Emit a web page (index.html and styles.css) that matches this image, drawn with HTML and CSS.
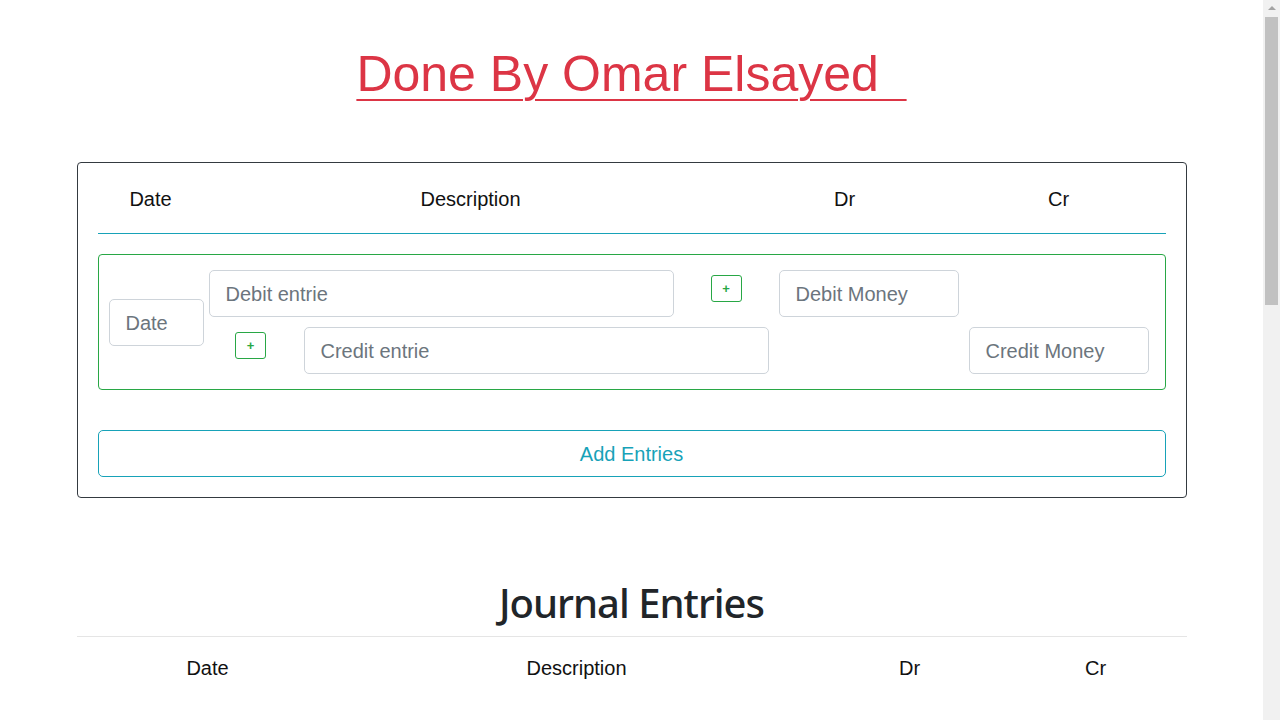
FILE: index.html
```html
<!DOCTYPE html>
<html lang="en">
<head>
<meta charset="utf-8">
<title>Journal Entries</title>
<link rel="stylesheet" href="styles.css">
</head>
<body>
<div class="container">
  <h1 class="title"><u>Done By Omar Elsayed&nbsp;&nbsp;</u></h1>

  <div class="card">
    <div class="head-grid">
      <div>Date</div>
      <div>Description</div>
      <div>Dr</div>
      <div>Cr</div>
    </div>

    <div class="entry">
      <input class="field date-field" type="text" placeholder="Date">
      <div class="rows">
        <div class="row">
          <input class="field desc-field" type="text" placeholder="Debit entrie">
          <div class="slot slot-wide"><button class="plus">+</button></div>
          <input class="field money-field" type="text" placeholder="Debit Money">
        </div>
        <div class="row">
          <div class="slot slot-left"><button class="plus">+</button></div>
          <input class="field desc-field" type="text" placeholder="Credit entrie">
          <div class="spacer"></div>
          <input class="field money-field" type="text" placeholder="Credit Money">
        </div>
      </div>
    </div>

    <button class="add-btn">Add Entries</button>
  </div>

  <section class="journal">
    <h2 class="journal-title">Journal Entries</h2>
    <hr class="divider">
    <div class="journal-head">
      <div>Date</div>
      <div>Description</div>
      <div>Dr</div>
      <div>Cr</div>
    </div>
    <div class="journal-body"></div>
  </section>
</div>

<div class="fake-scrollbar" aria-hidden="true">
  <div class="sb-arrow"></div>
  <div class="sb-thumb"></div>
</div>
</body>
</html>
```

FILE: styles.css
```css
html, body {
  margin: 0;
  padding: 0;
  background: #ffffff;
}

body {
  font-family: "Comic Sans MS", "Liberation Sans", Arial, sans-serif;
  color: #212529;
  padding-right: 17px;
}

.container {
  max-width: 1110px;
  margin: 0 auto;
  padding: 0 15px;
}

.title {
  margin: 44px 0 0;
  font-size: 50px;
  line-height: 60px;
  font-weight: 400;
  text-align: center;
  color: #dc3545;
}

.title u {
  text-decoration: underline;
  text-decoration-thickness: 2px;
  text-underline-offset: 8px;
}

.card {
  margin-top: 58px;
  border: 1px solid #343a40;
  border-radius: 4px;
  padding: 20px;
}

.head-grid {
  display: grid;
  grid-template-columns: 106px 534px 214px 214px;
  height: 50px;
  border-bottom: 1px solid #17a2b8;
  font-size: 20px;
  line-height: 32px;
  text-align: center;
  color: #111;
}

.entry {
  margin-top: 20px;
  border: 1px solid #28a745;
  border-radius: 4px;
  padding: 15px 10px;
  display: flex;
  align-items: center;
}

.rows {
  display: flex;
  flex-direction: column;
  gap: 10px;
}

.row {
  display: flex;
  align-items: center;
}

.field {
  box-sizing: border-box;
  height: 47px;
  border: 1px solid #ced4da;
  border-radius: 5px;
  padding: 2px 16px 0;
  font-family: inherit;
  font-size: 20px;
  color: #495057;
  background: #fff;
  outline: none;
}

.field::placeholder {
  color: #6c757d;
}

.date-field {
  width: 95px;
  margin-right: 5px;
}

.desc-field {
  width: 465px;
}

.money-field {
  width: 180px;
}

.slot {
  width: 95px;
  display: flex;
  justify-content: center;
  align-items: center;
}

.slot-wide {
  width: 105px;
}

.slot-left .plus {
  margin-right: 11px;
}

.spacer {
  width: 200px;
}

.plus {
  box-sizing: border-box;
  width: 31px;
  height: 27px;
  margin-bottom: 10px;
  padding: 0;
  border: 1px solid #28a745;
  border-radius: 3px;
  background: #fff;
  color: #28a745;
  font-family: "Liberation Sans", Arial, sans-serif;
  font-size: 13px;
  font-weight: 700;
  line-height: 25px;
}

.add-btn {
  display: block;
  box-sizing: border-box;
  width: 100%;
  height: 47px;
  margin-top: 40px;
  padding-top: 2px;
  border: 1px solid #17a2b8;
  border-radius: 5px;
  background: #fff;
  color: #17a2b8;
  font-family: inherit;
  font-size: 20px;
}

.journal {
  margin-top: 81px;
}

.journal-title {
  margin: 0;
  font-family: "Noto Sans", "Open Sans", sans-serif;
  font-size: 40px;
  line-height: 48px;
  font-weight: 500;
  letter-spacing: -1px;
  text-align: center;
  color: #212529;
}

.divider {
  margin: 9px 0 0;
  border: 0;
  border-top: 1px solid rgba(0, 0, 0, 0.1);
}

.journal-head {
  display: grid;
  grid-template-columns: 262px 476px 190px 182px;
  padding-top: 16px;
  font-size: 20px;
  line-height: 30px;
  text-align: center;
  color: #111;
}

.journal-body {
  height: 1000px;
}

.fake-scrollbar {
  position: fixed;
  top: 0;
  right: 0;
  width: 17px;
  height: 100vh;
  background: #f1f1f1;
}

.sb-arrow {
  width: 0;
  height: 0;
  margin: 6px auto 0;
  border-left: 4px solid transparent;
  border-right: 4px solid transparent;
  border-bottom: 4px solid #a3a3a3;
}

.sb-thumb {
  margin: 7px 2px 0;
  height: 288px;
  background: #c1c1c1;
}
```
